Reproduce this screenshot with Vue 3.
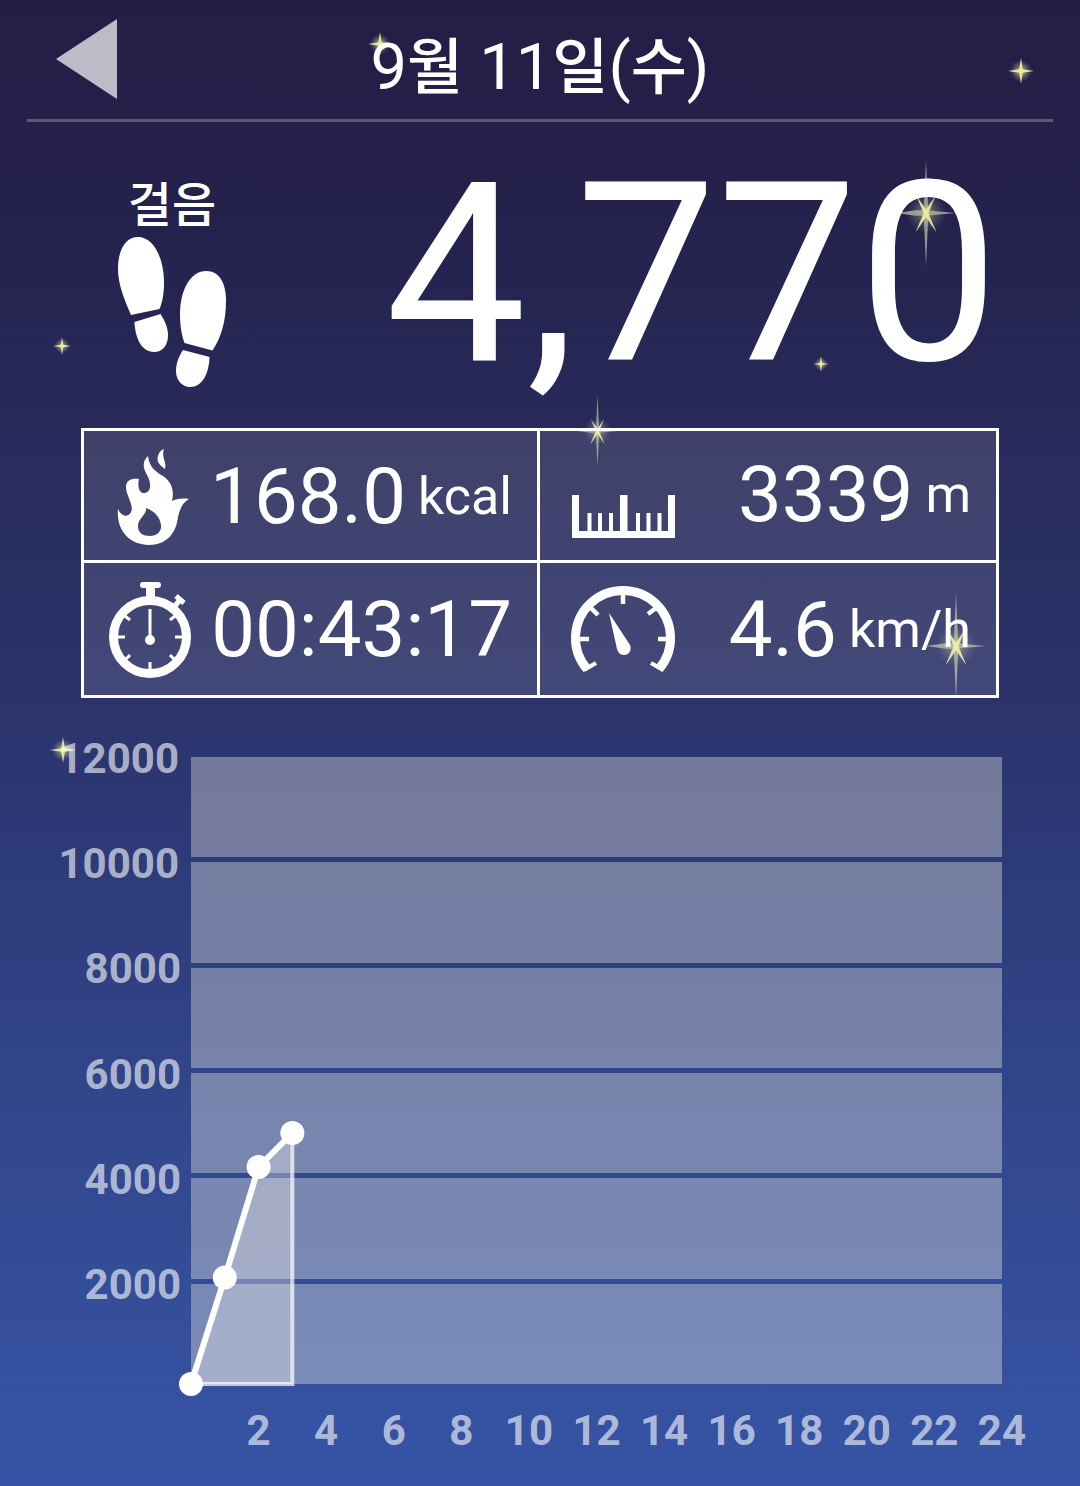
<template>
  <main class="screen">
    <svg class="sky" width="1080" height="1486" viewBox="0 0 1080 1486">
      <defs>
        <radialGradient id="glow">
          <stop offset="0" stop-color="#f4f4a0" stop-opacity=".95" />
          <stop offset=".35" stop-color="#d8dc96" stop-opacity=".5" />
          <stop offset="1" stop-color="#8fa0b0" stop-opacity="0" />
        </radialGradient>
        <filter id="soft" x="-50%" y="-50%" width="200%" height="200%">
          <feGaussianBlur stdDeviation=".014" />
        </filter>
      </defs>
      <g v-for="s in stars" :key="s.x" :transform="`translate(${s.x} ${s.y}) scale(${s.r})`">
        <template v-if="s.big">
          <circle r=".38" fill="url(#glow)" opacity=".6" />
          <path class="ray" filter="url(#soft)" d="M0-1 .045 0 0 1-.045 0ZM-.56 0-.2-.05 0-.05 .56 0 0 .05-.2 .05Z" />
          <path class="spark" d="M-.18-.32 .035-.02 .2 .37-.035 .03ZM.18-.32 .035 .03-.2 .37-.035-.02Z" />
        </template>
        <template v-else>
          <circle r=".85" fill="url(#glow)" />
          <path class="spark" d="M0-1 .14-.14 1 0 .14 .14 0 1-.14 .14-1 0-.14-.14Z" />
        </template>
      </g>
    </svg>

    <header class="header">
      <button class="header__back" type="button" aria-label="이전">
        <svg width="61" height="80" viewBox="0 0 61 80"><path d="M0 40 61 0V80Z" /></svg>
      </button>
      <h1>9<span class="ko">월</span> 11<span class="ko">일</span>(<span class="ko">수</span>)</h1>
    </header>

    <section class="steps">
      <div class="steps__label">
        <span>걸음</span>
        <svg width="108" height="150" viewBox="0 0 108 150">
          <path d="M13 78C7 64 0 48 0 32C0 12 8 0 20 0C36 0 46 22 46 45C46 55 45 64 41.500 72Z" />
          <path d="M16.500 85 42.500 77C47 84 50 91 50 98C50 109 44 115 36 115C23 115 17 100 16.500 85Z" />
          <path d="M66.500 106C63 97 62 86 62 77C62 52 73 34 88 34C102 34 108 47 108 64C108 84 103 101 94.500 113.500Z" />
          <path d="M65 113 91.500 120C91 137 84 150 72 150C64 150 58 143 58 134C58 126 61 119 65 113Z" />
        </svg>
      </div>
      <strong class="steps__count">4,770</strong>
    </section>

    <section class="stats">
      <div class="stat">
        <svg class="stat__flame" width="72" height="97" viewBox="0 0 72 97">
          <path fill-rule="evenodd" d="M0 60C3 67 9 69 12.500 64C17 57 8 47 8 38C8 31 14 29 21 30C19 39 22 45 27 44C34 42 33 33 29 26C24 17 25 12 30 7C31 18 38 23 45 27C55 34 56 43 54 52C58 50 63 49 71 50C64 54 62 60 60 68C58 85 48 96 31 96C12 96-2 82 0 60ZM28 59C29 66 20 69 20 77C20 84 25 87 32 87C39 87 44 82 43 76C42 69 37 62 28 59Z" />
          <path d="M46 0C43 8 49 13 47 20C42 16 38 13 40 7C41 3 43 1 46 0Z" />
        </svg>
        <p>168.0<small>kcal</small></p>
      </div>
      <div class="stat">
        <svg class="stat__ruler" width="103" height="43" viewBox="0 0 103 43">
          <path d="M0 0H7V36H15.500V18H19.500V36H26V18H30V36H37V18H41V36H48V0H55.500V36H64V18H68V36H74.500V18H78.500V36H85.500V18H89.500V36H96V0H103V43H0Z" />
        </svg>
        <p>3339<small>m</small></p>
      </div>
      <div class="stat">
        <svg class="stat__watch" width="82" height="97" viewBox="0 0 82 97">
          <circle class="line" cx="41" cy="55" r="36.500" stroke-width="9" />
          <path d="M34 0H49Q52 0 52 3T49 6H46V18H37V6H34Q31 6 31 3T34 0Z" />
          <path class="line" stroke-width="5" d="M65 25 71 18M67 14 75 21" />
          <path class="line" stroke-width="3" d="M41 27V55M9 55H16M66 55H73M41 80V87M16 34 21 38M66 34 61 38M16 78 21 73M66 78 61 73" />
          <circle cx="41" cy="58" r="5" />
        </svg>
        <p>00:43:17</p>
      </div>
      <div class="stat">
        <svg class="stat__gauge" width="105" height="86" viewBox="0 0 105 86">
          <path class="line" stroke-width="9" d="M16 82A47.500 47.500 0 1 1 88 82" />
          <path class="line" stroke-width="4.500" d="M52 8V17M8 52H18M97 52H87M20 21 27 28M85 21 77 27" />
          <path class="line" stroke-width="4" d="M13 83 25 76M92 83 80 76" />
          <path d="M38 26 59 58C61 63 58 68 53 68C49 68 47 65 46 62Z" />
        </svg>
        <p>4.6<small>km/h</small></p>
      </div>
    </section>

    <section class="chart">
      <ul class="chart__y">
        <li v-for="n in yLabels" :key="n">{{ n }}</li>
      </ul>
      <div class="chart__plot">
        <i v-for="n in yLabels" :key="n" class="chart__band"></i>
        <svg class="chart__series" width="811" height="627" viewBox="0 0 811 627">
          <path class="chart__area" :d="areaPath" />
          <path class="chart__edge" :d="edgePath" />
          <path class="chart__line" :d="linePath" />
          <circle v-for="p in points" :key="p.x" :cx="p.x" :cy="p.y" r="12" />
        </svg>
      </div>
      <ul class="chart__x">
        <li v-for="h in 12" :key="h">{{ h * 2 }}</li>
      </ul>
    </section>
  </main>
</template>

<script setup>
import { computed } from 'vue';

const yLabels = [12000, 10000, 8000, 6000, 4000, 2000];

const hourly = [0, 2030, 4140, 4790];

const stars = [
  { x: 380, y: 44, r: 12 },
  { x: 1021, y: 71, r: 13 },
  { x: 62, y: 346, r: 9 },
  { x: 821, y: 364, r: 8 },
  { x: 63, y: 750, r: 13 },
  { x: 926, y: 213, r: 53, big: true },
  { x: 597.5, y: 431, r: 36, big: true },
  { x: 956, y: 646, r: 53, big: true }
];

const points = computed(() =>
  hourly.map((steps, hour) => ({
    x: (hour * 811) / 24,
    y: 627 - (steps / 12000) * 629
  }))
);

const linePath = computed(() => 'M' + points.value.map((p) => `${p.x} ${p.y}`).join('L'));

const edgePath = computed(() => {
  const last = points.value[points.value.length - 1];
  return `M0 627H${last.x}V${last.y}`;
});

const areaPath = computed(() => `${linePath.value}V627H0Z`);
</script>

<style>
body {
  margin: 0;
}
</style>

<style scoped>
.screen {
  position: relative;
  z-index: 0;
  box-sizing: border-box;
  width: 1080px;
  height: 1486px;
  overflow: hidden;
  background: linear-gradient(#241e45 0, #24214b 200px, #282a5a 420px, #2b346d 720px, #2e3e7e 930px, #334a92 1190px, #3654a6 1486px);
  color: white;
  font-family: Roboto, 'Noto Sans CJK KR', sans-serif;
}

svg {
  display: block;
  fill: white;
  overflow: visible;
}

.line {
  fill: none;
  stroke: white;
}

.header {
  display: grid;
  grid-template-columns: 90px 1fr 90px;
  align-items: start;
  height: 119px;
  margin: 0 27px;
  border-bottom: 3px solid #5b587c;
}

.header__back {
  padding: 19px 0 0 29px;
  border: none;
  background: none;
}

.header__back svg {
  fill: #bebbc9;
}

h1 {
  margin: 0;
  padding-top: 28px;
  font-size: 65px;
  font-weight: 400;
  line-height: 78px;
  text-align: center;
  white-space: nowrap;
}

.ko {
  font-size: 61px;
  font-weight: 500;
  line-height: 1;
}

.steps {
  display: flex;
  justify-content: space-between;
  height: 306px;
  padding: 0 81px 0 118px;
}

.steps__label {
  display: flex;
  flex-direction: column;
  align-items: center;
  width: 108px;
  padding-top: 55px;
}

.steps__label span {
  height: 60px;
  font-size: 48px;
  font-weight: 500;
  line-height: 58px;
  white-space: nowrap;
}

.steps__count {
  padding-top: 2px;
  font-size: 251px;
  font-weight: 400;
  line-height: 300px;
}

.stats {
  display: grid;
  grid-template-columns: 453px 456px;
  grid-template-rows: 129px 132px;
  gap: 3px;
  width: 912px;
  margin-left: 81px;
  border: 3px solid white;
  background: linear-gradient(white, white) 453px 0 / 3px 100% no-repeat,
    linear-gradient(white, white) 0 129px / 100% 3px no-repeat,
    rgba(255, 250, 225, 0.11);
}

.stat {
  display: flex;
  align-items: flex-start;
  justify-content: space-between;
  padding: 0 25px;
}

.stat p {
  margin: 0;
  padding-top: 19px;
  font-size: 78px;
  line-height: 94px;
}

.stat:nth-child(2) p {
  padding-top: 17px;
}

.stat:nth-child(n + 3) p {
  padding-top: 20px;
}

.stat small {
  margin-left: 12px;
  font-size: 52px;
  line-height: 1;
  vertical-align: 9px;
}

.stat__flame {
  margin: 18px 0 0 9px;
}

.stat__ruler {
  margin: 64px 0 0 7px;
}

.stat__watch {
  margin-top: 19px;
}

.stat__gauge {
  margin: 24px 0 0 6px;
}

.chart {
  display: grid;
  grid-template-columns: 191px 811px;
  margin-top: 59px;
}

ul {
  margin: 0;
  padding: 0;
  list-style: none;
  color: rgba(255, 255, 255, 0.62);
  font-size: 42px;
  font-weight: 700;
}

.chart__y {
  padding-right: 10px;
  text-align: right;
}

.chart__y li {
  height: 105.2px;
  line-height: 4px;
}

.chart__y li:nth-child(-n + 2) {
  padding-right: 2px;
}

.chart__plot {
  position: relative;
  display: flex;
  flex-direction: column;
  gap: 5px;
  height: 627px;
}

.chart__band {
  flex: 1;
  background: rgba(252, 248, 236, 0.35);
}

.chart__series {
  position: absolute;
  inset: 0;
}

.chart__area {
  fill: rgba(255, 250, 240, 0.32);
}

.chart__edge {
  fill: none;
  stroke: rgba(255, 255, 255, 0.7);
  stroke-width: 4;
}

.chart__line {
  fill: none;
  stroke: white;
  stroke-width: 6;
}

.chart__x {
  grid-column: 2;
  display: flex;
  width: 811px;
  margin-left: 33.8px;
}

.chart__x li {
  width: 67.58px;
  padding-top: 18px;
  line-height: 50px;
  text-align: center;
}

.sky {
  position: absolute;
  inset: 0;
  z-index: -1;
}

.ray {
  fill: #b9bda6;
  opacity: 0.75;
}

.spark {
  fill: #f0f19f;
  opacity: 0.9;
}
</style>
